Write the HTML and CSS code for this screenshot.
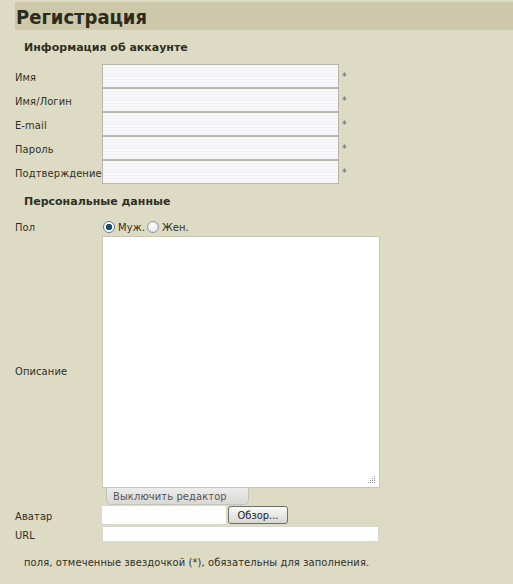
FILE: index.html
```html
<!DOCTYPE html>
<html lang="ru">
<head>
  <meta charset="UTF-8" />
  <title>Регистрация</title>
  <link rel="stylesheet" href="styles.css">
</head>
<body>
  <h1 class="page-title">Регистрация</h1>

  <form class="reg-form">
    <h3 class="section">Информация об аккаунте</h3>

    <div class="row">
      <label for="name">Имя</label>
      <input type="text" id="name" class="field">
      <span class="req">*</span>
    </div>
    <div class="row">
      <label for="login">Имя/Логин</label>
      <input type="text" id="login" class="field">
      <span class="req">*</span>
    </div>
    <div class="row">
      <label for="email">E-mail</label>
      <input type="text" id="email" class="field">
      <span class="req">*</span>
    </div>
    <div class="row">
      <label for="pass">Пароль</label>
      <input type="password" id="pass" class="field">
      <span class="req">*</span>
    </div>
    <div class="row">
      <label for="pass2">Подтверждение</label>
      <input type="password" id="pass2" class="field">
      <span class="req">*</span>
    </div>

    <h3 class="section section-2">Персональные данные</h3>

    <div class="row row-sex">
      <label>Пол</label>
      <span class="radio on"></span><span class="radio-text">Муж.</span>
      <span class="radio"></span><span class="radio-text">Жен.</span>
    </div>

    <div class="row row-desc">
      <label for="desc">Описание</label>
      <div class="desc-box">
        <div class="textarea">
          <svg class="grip" width="8" height="8" viewBox="0 0 8 8">
            <rect x="6" y="0" width="1" height="1" fill="#9a9a9a"/>
            <rect x="4" y="2" width="1" height="1" fill="#9a9a9a"/>
            <rect x="6" y="2" width="1" height="1" fill="#9a9a9a"/>
            <rect x="2" y="4" width="1" height="1" fill="#9a9a9a"/>
            <rect x="4" y="4" width="1" height="1" fill="#9a9a9a"/>
            <rect x="6" y="4" width="1" height="1" fill="#9a9a9a"/>
            <rect x="0" y="6" width="1" height="1" fill="#9a9a9a"/>
            <rect x="2" y="6" width="1" height="1" fill="#9a9a9a"/>
            <rect x="4" y="6" width="1" height="1" fill="#9a9a9a"/>
            <rect x="6" y="6" width="1" height="1" fill="#9a9a9a"/>
          </svg>
        </div>
        <button type="button" class="editor-btn">Выключить редактор</button>
      </div>
    </div>

    <div class="row row-avatar">
      <label>Аватар</label>
      <span class="file-text"></span>
      <button type="button" class="browse-btn">Обзор...</button>
    </div>

    <div class="row row-url">
      <label for="url">URL</label>
      <input type="text" id="url" class="url-field">
    </div>

    <p class="note">поля, отмеченные звездочкой (*), обязательны для заполнения.</p>
  </form>
</body>
</html>
```

FILE: styles.css
```css
* { margin: 0; padding: 0; box-sizing: border-box; }

body {
  background: #dedbc4;
  font-family: "DejaVu Sans Condensed", "DejaVu Sans", Verdana, sans-serif;
  font-size: 11px;
  letter-spacing: 0.12px;
  color: #2f2f25;
  padding: 2px 0 0 15px;
}

.page-title {
  background: #cdc8a9;
  height: 28px;
  font-size: 20px;
  font-weight: bold;
  letter-spacing: 0;
  line-height: 30px;
  padding-left: 1px;
  color: #2b2b20;
}

.section {
  font-family: "DejaVu Sans", Verdana, sans-serif;
  font-size: 11px;
  font-weight: bold;
  letter-spacing: 0;
  margin: 11px 0 0 9px;
  height: 14px;
  line-height: 14px;
}
.reg-form .section:first-child { margin-bottom: 9px; }
.section-2 { margin-top: 11px; margin-bottom: 8px; }

.row {
  display: flex;
  align-items: center;
}
.row label {
  width: 87px;
  flex: none;
  white-space: nowrap;
  padding-top: 2px;
}

.field {
  width: 237px;
  height: 24px;
  border: 1px solid #b6b6ae;
  background: repeating-linear-gradient(#f8f8fb 0 2px, #f1f1f5 2px 3px);
  outline: none;
}

.req {
  margin-left: 3px;
  font-size: 10px;
  color: #5e5e52;
  margin-top: 0;
}

.row-sex { height: 20px; }
.row-sex label { padding-top: 0; }
.radio {
  width: 12px;
  height: 12px;
  border-radius: 50%;
  border: 1px solid #8c9aa4;
  background: radial-gradient(circle at 40% 35%, #ffffff, #d9dde0);
  margin-left: 1px;
}
.radio.on {
  background: radial-gradient(circle, #1d4f6e 0 3px, #ffffff 3.5px);
  border-color: #5d7c90;
}
.radio-text { margin: 0 1px 0 3px; }

.row-desc { margin-top: -1px; }
.desc-box {
  display: flex;
  flex-direction: column;
}
.textarea {
  width: 278px;
  height: 252px;
  background: #fff;
  border: 1px solid #c8c6b4;
  position: relative;
}
.grip {
  position: absolute;
  right: 3px;
  bottom: 3px;
}

.editor-btn {
  align-self: flex-start;
  margin-left: 4px;
  width: 143px;
  height: 17px;
  border: 1px solid #c4c3b8;
  border-top: none;
  border-radius: 0 0 5px 5px;
  background: linear-gradient(#ececec, #d8d8d4);
  font-family: "DejaVu Sans Condensed", "DejaVu Sans", Verdana, sans-serif;
  font-size: 11px;
  letter-spacing: 0.12px;
  color: #555;
  text-align: left;
  padding-left: 6px;
}

.row-avatar { margin-top: 1px; height: 18px; }
.file-text {
  width: 124px;
  height: 18px;
  background: #fff;
}
.browse-btn {
  margin-left: 2px;
  width: 60px;
  height: 18px;
  border: 1px solid #6f6f6a;
  border-radius: 3px;
  background: linear-gradient(#fafafa, #d6d6d2);
  font-family: "DejaVu Sans Condensed", "DejaVu Sans", Verdana, sans-serif;
  font-size: 11px;
  color: #222;
}

.row-url { margin-top: 2px; height: 16px; }
.url-field {
  width: 277px;
  height: 16px;
  border: 1px solid #d8d8d0;
  background: #fff;
  outline: none;
}

.note {
  margin: 14px 0 0 9px;
  color: #2f2f25;
}
```
